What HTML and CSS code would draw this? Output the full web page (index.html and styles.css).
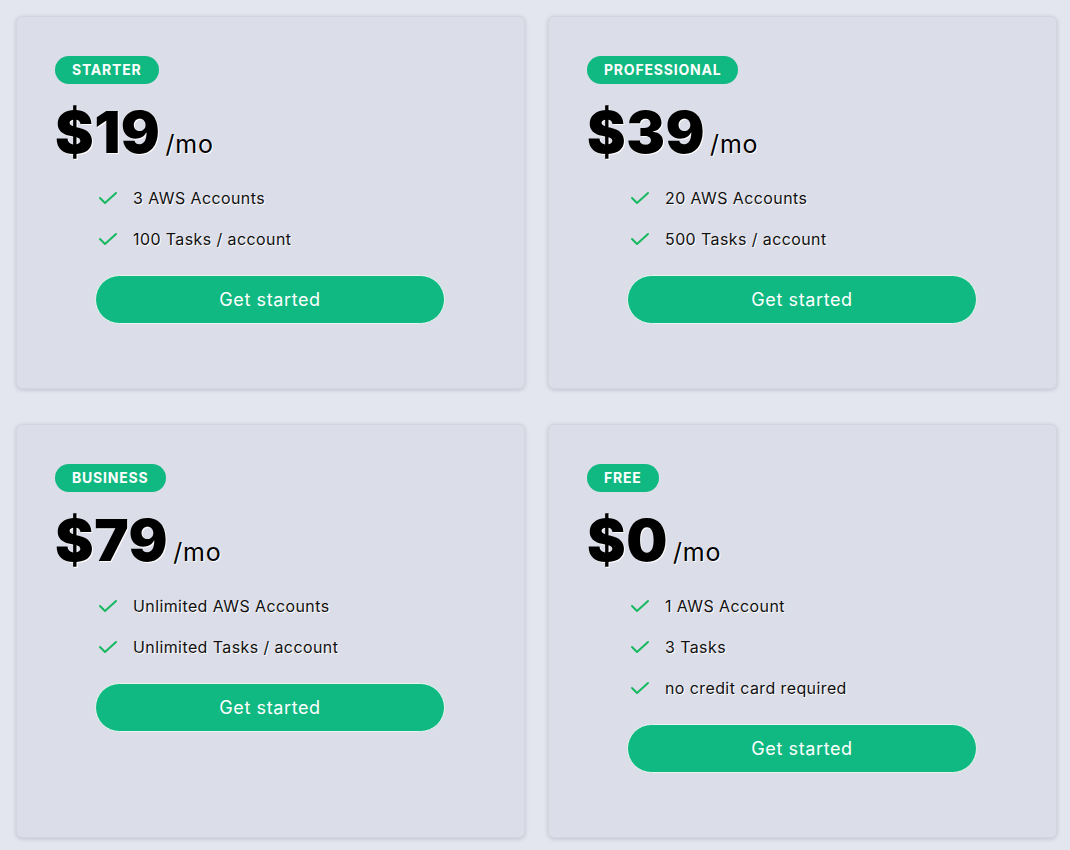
FILE: index.html
```html
<!DOCTYPE html>
<html lang="en">
<head>
<meta charset="utf-8">
<title>Pricing</title>
<link rel="stylesheet" href="styles.css">
</head>
<body>
<main class="grid">
  <section class="card">
    <span class="badge">Starter</span>
    <div class="price"><span class="amount">$19</span><span class="per">/mo</span></div>
    <ul class="features">
      <li><svg class="check" viewBox="0 0 20 14"><polyline points="2,7 7,12 18,2"/></svg>3 AWS Accounts</li>
      <li><svg class="check" viewBox="0 0 20 14"><polyline points="2,7 7,12 18,2"/></svg>100 Tasks / account</li>
    </ul>
    <button class="cta">Get started</button>
  </section>
  <section class="card">
    <span class="badge">Professional</span>
    <div class="price"><span class="amount">$39</span><span class="per">/mo</span></div>
    <ul class="features">
      <li><svg class="check" viewBox="0 0 20 14"><polyline points="2,7 7,12 18,2"/></svg>20 AWS Accounts</li>
      <li><svg class="check" viewBox="0 0 20 14"><polyline points="2,7 7,12 18,2"/></svg>500 Tasks / account</li>
    </ul>
    <button class="cta">Get started</button>
  </section>
  <section class="card">
    <span class="badge">Business</span>
    <div class="price"><span class="amount">$79</span><span class="per">/mo</span></div>
    <ul class="features">
      <li><svg class="check" viewBox="0 0 20 14"><polyline points="2,7 7,12 18,2"/></svg>Unlimited AWS Accounts</li>
      <li><svg class="check" viewBox="0 0 20 14"><polyline points="2,7 7,12 18,2"/></svg>Unlimited Tasks / account</li>
    </ul>
    <button class="cta">Get started</button>
  </section>
  <section class="card">
    <span class="badge">Free</span>
    <div class="price"><span class="amount">$0</span><span class="per">/mo</span></div>
    <ul class="features">
      <li><svg class="check" viewBox="0 0 20 14"><polyline points="2,7 7,12 18,2"/></svg>1 AWS Account</li>
      <li><svg class="check" viewBox="0 0 20 14"><polyline points="2,7 7,12 18,2"/></svg>3 Tasks</li>
      <li><svg class="check" viewBox="0 0 20 14"><polyline points="2,7 7,12 18,2"/></svg>no credit card required</li>
    </ul>
    <button class="cta">Get started</button>
  </section>
</main>
</body>
</html>
```
FILE: styles.css
```css
* { box-sizing: border-box; }
html, body { margin: 0; padding: 0; }
body {
  background: #e4e6ef;
  font-family: Inter, "Open Sans", "Liberation Sans", sans-serif;
  color: #111;
}
.grid {
  display: grid;
  grid-template-columns: 509px 509px;
  column-gap: 23px;
  row-gap: 35px;
  padding: 16px;
}
.card {
  background: #dbdde8;
  border: 1px solid #d3d5e0;
  border-radius: 6px;
  box-shadow: 0 1px 4px rgba(60, 64, 90, 0.22);
  padding: 39px 38px 64px;
  display: flex;
  flex-direction: column;
  align-items: flex-start;
}
.badge {
  display: inline-block;
  background: #10b981;
  color: #fff;
  font-weight: 700;
  font-size: 14px;
  letter-spacing: 0.8px;
  text-transform: uppercase;
  line-height: 28px;
  height: 28px;
  padding: 0 17px;
  border-radius: 14px;
}
.price {
  display: flex;
  align-items: baseline;
  margin-top: 12px;
  text-shadow: 1px 1px 0 #fff;
}
.amount {
  font-size: 58px;
  font-weight: 900;
  letter-spacing: 0.5px;
  line-height: 72px;
  color: #000;
}
.per {
  font-size: 25px;
  letter-spacing: 0.8px;
  margin-left: 5px;
  color: #000;
}
.features {
  list-style: none;
  margin: 18px 0 0;
  padding: 0 0 0 43px;
  display: flex;
  flex-direction: column;
  gap: 17px;
}
.features li {
  display: flex;
  align-items: center;
  font-size: 16px;
  line-height: 24px;
  letter-spacing: 0.4px;
  text-shadow: 1px 1px 0 #fff;
}
.check {
  width: 20px;
  height: 14px;
  margin-right: 15px;
  fill: none;
  stroke: #16b95f;
  stroke-width: 2;
  stroke-linecap: round;
  stroke-linejoin: round;
}
.cta {
  margin: 24px 0 0 40px;
  width: 350px;
  height: 49px;
  border: 1px solid #e8f6ef;
  border-radius: 25px;
  background: #10b981;
  color: #fff;
  font-family: inherit;
  font-size: 18px;
  letter-spacing: 0.6px;
  cursor: pointer;
}
```
